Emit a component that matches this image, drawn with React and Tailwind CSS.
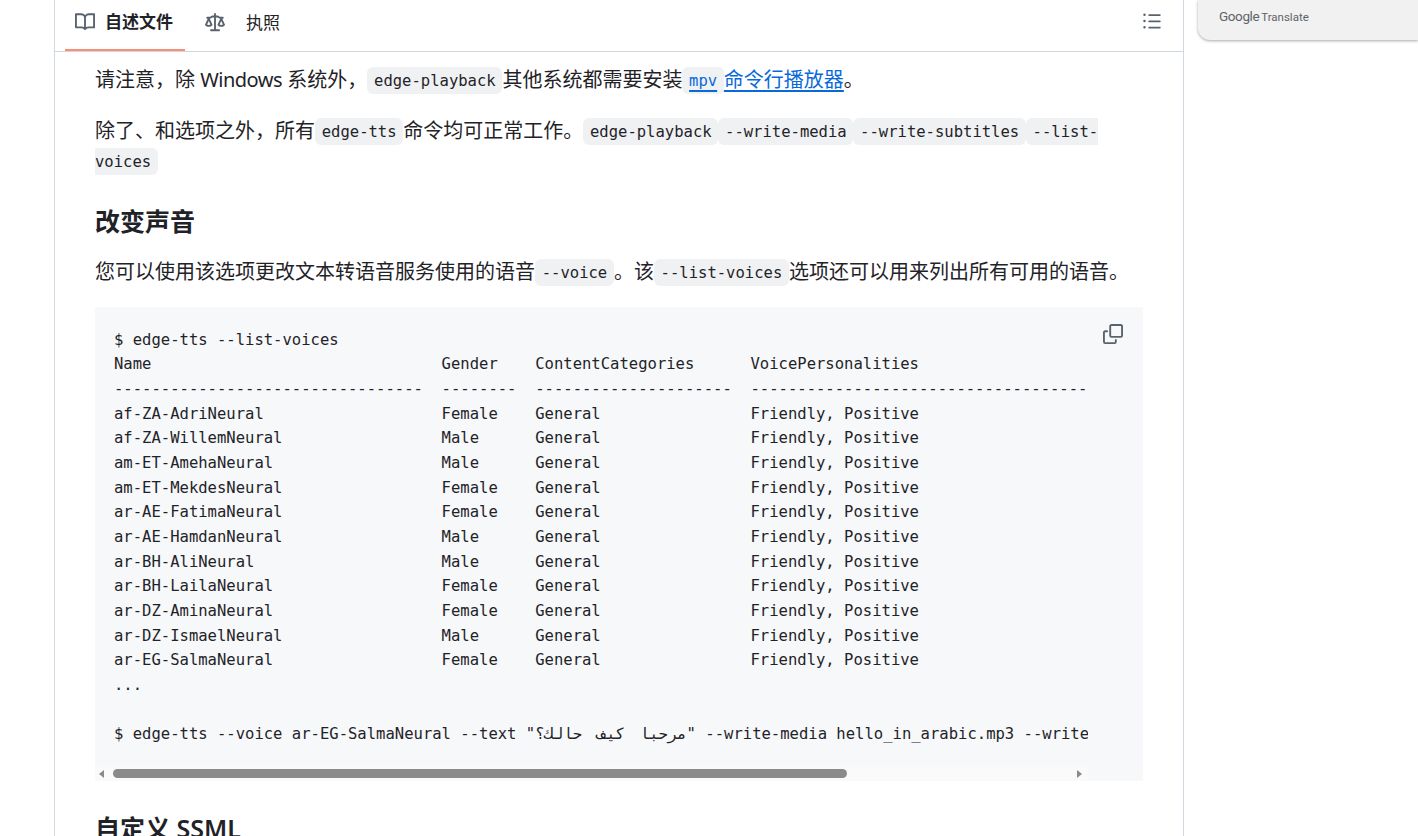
import React from "react";

const sans = "font-['Noto_Sans','Noto_Sans_CJK_SC',sans-serif]";
const rows = [
  ["af-ZA-AdriNeural", "Female"],
  ["af-ZA-WillemNeural", "Male"],
  ["am-ET-AmehaNeural", "Male"],
  ["am-ET-MekdesNeural", "Female"],
  ["ar-AE-FatimaNeural", "Female"],
  ["ar-AE-HamdanNeural", "Male"],
  ["ar-BH-AliNeural", "Male"],
  ["ar-BH-LailaNeural", "Female"],
  ["ar-DZ-AminaNeural", "Female"],
  ["ar-DZ-IsmaelNeural", "Male"],
  ["ar-EG-SalmaNeural", "Female"],
];
const code = [
  "$ edge-tts --list-voices",
  "Name                               Gender    ContentCategories      VoicePersonalities",
  "---------------------------------  --------  ---------------------  --------------------------------------",
  ...rows.map(([n, g]) => n.padEnd(35) + g.padEnd(10) + "General".padEnd(23) + "Friendly, Positive"),
  "...",
  "",
  "",
].join("\n");

function C({ children }) {
  return (
    <code className="rounded-md bg-[#eff1f3] px-[6.7px] py-[4.5px] align-[1.5px] font-['DejaVu_Sans_Mono',monospace] text-[15.56px] leading-none">
      {children}
    </code>
  );
}

export default function App() {
  return (
    <div className={`flex h-[836px] w-[1418px] overflow-hidden bg-white text-[#1f2328] ${sans}`}>
      <main className="ml-[54px] h-full w-[1130px] shrink-0 border-x border-[#d1d9e0]">
        <nav className="flex h-[52px] items-stretch border-b border-[#d1d9e0] pl-[10px] pr-[21px]">
          <div className="flex w-[120px] items-center gap-[10px] border-b-2 border-[#fd8c73] pb-[5px] pl-[10px] text-[17px] font-semibold">
            <svg width="20" height="20" viewBox="0 0 16 16" fill="#59636e"><path d="M0 1.75A.75.75 0 0 1 .75 1h4.253c1.227 0 2.317.59 3 1.501A3.743 3.743 0 0 1 11.006 1h4.245a.75.75 0 0 1 .75.75v10.5a.75.75 0 0 1-.75.75h-4.507a2.25 2.25 0 0 0-1.591.659l-.622.621a.75.75 0 0 1-1.06 0l-.622-.621A2.25 2.25 0 0 0 5.258 13H.75a.75.75 0 0 1-.75-.75Zm7.251 10.324.004-5.073-.002-2.253A2.25 2.25 0 0 0 5.003 2.5H1.5v9h3.757a3.75 3.75 0 0 1 1.994.574ZM8.755 4.75l-.004 7.322a3.752 3.752 0 0 1 1.992-.572H14.5v-9h-3.495a2.25 2.25 0 0 0-2.25 2.25Z" /></svg>
            <span className="whitespace-nowrap">自述文件</span>
          </div>
          <div className="ml-[20px] flex items-center gap-[21px] pb-[5px] text-[17px]">
            <svg width="20" height="20" viewBox="0 0 16 16" fill="#59636e"><path d="M8.75.75V2h.985c.304 0 .603.08.867.231l1.29.736c.038.022.08.033.124.033h2.234a.75.75 0 0 1 0 1.5h-.427l2.111 4.692a.75.75 0 0 1-.154.838l-.53-.53.529.531-.001.002-.002.002-.006.006-.006.005-.01.01-.045.04c-.21.176-.441.327-.686.45C14.556 10.78 13.88 11 13 11a4.498 4.498 0 0 1-2.023-.454 3.544 3.544 0 0 1-.686-.45l-.045-.04-.016-.015-.006-.006-.004-.004v-.001a.75.75 0 0 1-.154-.838L12.178 4.5h-.162c-.305 0-.604-.079-.868-.231l-1.29-.736a.245.245 0 0 0-.124-.033H8.75V13h2.5a.75.75 0 0 1 0 1.5h-6.5a.75.75 0 0 1 0-1.5h2.5V3.5h-.984a.245.245 0 0 0-.124.033l-1.289.737c-.265.15-.564.23-.869.23h-.162l2.112 4.692a.75.75 0 0 1-.154.838l-.53-.53.529.531-.001.002-.002.002-.006.006-.016.015-.045.04c-.21.176-.441.327-.686.45C4.556 10.78 3.88 11 3 11a4.498 4.498 0 0 1-2.023-.454 3.544 3.544 0 0 1-.686-.45l-.045-.04-.016-.015-.006-.006-.004-.004v-.001a.75.75 0 0 1-.154-.838L2.178 4.5H1.75a.75.75 0 0 1 0-1.5h2.234a.249.249 0 0 0 .125-.033l1.288-.737c.265-.15.564-.23.869-.23h.984V.75a.75.75 0 0 1 1.5 0Zm2.945 8.477c.285.135.718.273 1.305.273s1.02-.138 1.305-.273L13 6.327Zm-10 0c.285.135.718.273 1.305.273s1.02-.138 1.305-.273L3 6.327Z" /></svg>
            <span>执照</span>
          </div>
          <div className="ml-auto flex items-center pb-[9px]">
            <svg width="20" height="20" viewBox="0 0 16 16" fill="#59636e"><path d="M5.75 2.5h8.5a.75.75 0 0 1 0 1.5h-8.5a.75.75 0 0 1 0-1.5Zm0 5h8.5a.75.75 0 0 1 0 1.5h-8.5a.75.75 0 0 1 0-1.5Zm0 5h8.5a.75.75 0 0 1 0 1.5h-8.5a.75.75 0 0 1 0-1.5ZM2 14a1 1 0 1 1 0-2 1 1 0 0 1 0 2Zm1-6a1 1 0 1 1-2 0 1 1 0 0 1 2 0ZM2 4a1 1 0 1 1 0-2 1 1 0 0 1 0 2Z" /></svg>
          </div>
        </nav>
        <article className="pl-[40px] pr-[40px] pt-[13px] text-[20px] leading-[30px]">
          <p>
            请注意，除 <span className="tracking-[-0.5px]">Windows</span> 系统外，<C>edge-playback</C>其他系统都需要安装<a className="text-[#0969da] underline decoration-[1.5px] underline-offset-[3px]"><C>mpv</C><span>命令行播放器</span></a>。
          </p>
          <p className="mt-[21px]">
            除了、和选项之外，所有<C>edge-tts</C>命令均可正常工作。<C>edge-playback</C><C>--write-media</C><C>--write-subtitles</C><C>--list-voices</C>
          </p>
          <h2 className="mt-[29px] text-[25px] font-semibold leading-[32px]">改变声音</h2>
          <p className="mt-[20px]">
            您可以使用该选项更改文本转语音服务使用的语音<C>--voice</C>。该<C>--list-voices</C>选项还可以用来列出所有可用的语音。
          </p>
          <div className="relative mt-[20px] h-[474px] w-[1048px] bg-[#f6f8fa]">
            <div className="h-[460px] w-[993px] overflow-hidden pl-[19px] pt-[20.85px]">
              <pre className="font-['DejaVu_Sans_Mono','Noto_Sans',monospace] text-[15.56px] leading-[24.64px]">{code}{'$ edge-tts --voice ar-EG-SalmaNeural --text "'}<span className="[word-spacing:5.5px]">مرحبا كيف حالك؟</span>{'" --write-media hello_in_arabic.mp3 --write-subtitles hello_in_arabic.vtt'}</pre>
            </div>
            <div className="flex h-[14px] w-[993px] items-center bg-[#fafafa]">
              <span className="ml-[4px] h-0 w-0 border-y-[4px] border-r-[5px] border-y-transparent border-r-[#8a8a8a]" />
              <span className="mb-[1px] ml-[9px] h-[9px] w-[734px] rounded-full bg-[#8a8a8a]" />
              <span className="ml-auto mr-[6px] h-0 w-0 border-y-[4px] border-l-[5px] border-y-transparent border-l-[#8a8a8a]" />
            </div>
            <svg className="absolute right-[20px] top-[17px]" width="20" height="20" viewBox="0 0 16 16" fill="#59636e"><path d="M0 6.75C0 5.784.784 5 1.75 5h1.5a.75.75 0 0 1 0 1.5h-1.5a.25.25 0 0 0-.25.25v7.5c0 .138.112.25.25.25h7.5a.25.25 0 0 0 .25-.25v-1.5a.75.75 0 0 1 1.5 0v1.5A1.75 1.75 0 0 1 9.25 16h-7.5A1.75 1.75 0 0 1 0 14.25Z" /><path d="M5 1.75C5 .784 5.784 0 6.75 0h7.5C15.216 0 16 .784 16 1.75v7.5A1.75 1.75 0 0 1 14.25 11h-7.5A1.75 1.75 0 0 1 5 9.25Zm1.75-.25a.25.25 0 0 0-.25.25v7.5c0 .138.112.25.25.25h7.5a.25.25 0 0 0 .25-.25v-7.5a.25.25 0 0 0-.25-.25Z" /></svg>
          </div>
          <h2 className="mt-[31px] text-[25px] font-semibold leading-[32px]">自定义 SSML</h2>
        </article>
      </main>
      <aside className="ml-[14px] h-[40px] flex-1 rounded-bl-[12px] bg-[#f1f1f1] pl-[21px] pt-[7px] shadow-[0_1px_3px_rgba(60,64,67,0.45)]">
        <div className="flex items-baseline gap-[2px] font-['Roboto',sans-serif] text-[11.5px] leading-[18px] text-[#5f6368]">
          <span className="text-[13.5px] tracking-[-0.4px]">Google</span>
          <span>Translate</span>
        </div>
      </aside>
    </div>
  );
}
